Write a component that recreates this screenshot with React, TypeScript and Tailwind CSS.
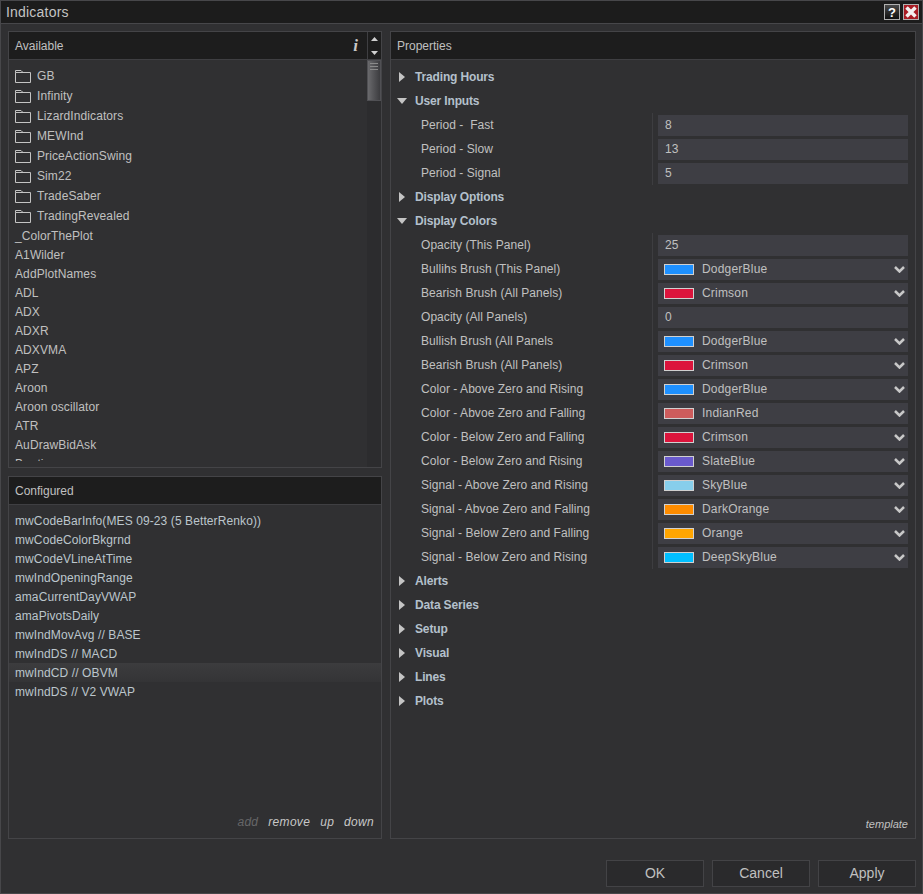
const font = "font-['Liberation_Sans',Arial,sans-serif]"

const folders = ["GB", "Infinity", "LizardIndicators", "MEWInd", "PriceActionSwing", "Sim22", "TradeSaber", "TradingRevealed"]

const available = [
  "_ColorThePlot",
  "A1Wilder",
  "AddPlotNames",
  "ADL",
  "ADX",
  "ADXR",
  "ADXVMA",
  "APZ",
  "Aroon",
  "Aroon oscillator",
  "ATR",
  "AuDrawBidAsk",
  "Bar timer",
]

const configured = [
  "mwCodeBarInfo(MES 09-23 (5 BetterRenko))",
  "mwCodeColorBkgrnd",
  "mwCodeVLineAtTime",
  "mwIndOpeningRange",
  "amaCurrentDayVWAP",
  "amaPivotsDaily",
  "mwIndMovAvg // BASE",
  "mwIndDS // MACD",
  "mwIndCD // OBVM",
  "mwIndDS // V2 VWAP",
]

type Prop = { label: string; value: string; color?: string }

const userInputs: Prop[] = [
  { label: "Period -  Fast", value: "8" },
  { label: "Period - Slow", value: "13" },
  { label: "Period - Signal", value: "5" },
]

const displayColors: Prop[] = [
  { label: "Opacity (This Panel)", value: "25" },
  { label: "Bullihs Brush (This Panel)", value: "DodgerBlue", color: "#1e90ff" },
  { label: "Bearish Brush (All Panels)", value: "Crimson", color: "#dc143c" },
  { label: "Opacity (All Panels)", value: "0" },
  { label: "Bullish Brush (All Panels", value: "DodgerBlue", color: "#1e90ff" },
  { label: "Bearish Brush (All Panels)", value: "Crimson", color: "#dc143c" },
  { label: "Color - Above Zero and Rising", value: "DodgerBlue", color: "#1e90ff" },
  { label: "Color - Abvoe Zero and Falling", value: "IndianRed", color: "#cd5c5c" },
  { label: "Color - Below Zero and Falling", value: "Crimson", color: "#dc143c" },
  { label: "Color - Below Zero and Rising", value: "SlateBlue", color: "#6a5acd" },
  { label: "Signal - Above Zero and Rising", value: "SkyBlue", color: "#87ceeb" },
  { label: "Signal - Abvoe Zero and Falling", value: "DarkOrange", color: "#ff8c00" },
  { label: "Signal - Below Zero and Falling", value: "Orange", color: "#ffa500" },
  { label: "Signal - Below Zero and Rising", value: "DeepSkyBlue", color: "#00bfff" },
]

function FolderIcon() {
  return (
    <svg width="16" height="13" viewBox="0 0 16 13" fill="none" stroke="#c4c4c4" strokeWidth="1" className="shrink-0">
      <path d="M0.5 2.5V0.5H6L8 2.5H15.5V12.5H0.5V2.5H8" />
    </svg>
  )
}

function Section({ name, open }: { name: string; open?: boolean }) {
  return (
    <div className="flex h-6 items-center">
      <div className="flex w-[24px] justify-center pr-[3px]">
        {open ? (
          <svg width="10" height="6" viewBox="0 0 10 6">
            <path d="M0 0H10L5 6Z" fill="#c4c4c4" />
          </svg>
        ) : (
          <svg width="6" height="10" viewBox="0 0 6 10">
            <path d="M0 0L6 5L0 10Z" fill="#c4c4c4" />
          </svg>
        )}
      </div>
      <span className="text-[12px] font-bold tracking-[-0.15px] text-[#b4c0cc]">{name}</span>
    </div>
  )
}

function PropRows({ rows }: { rows: Prop[] }) {
  return (
    <div>
      {rows.map((r, i) => (
        <div key={i} className="flex h-6 items-center">
          <div className="w-[261px] shrink-0 whitespace-pre pl-[30px] text-[12px] tracking-[0.05px] text-[#c0c0c0]">{r.label}</div>
          <div className="flex h-full w-[6px] shrink-0 justify-start">
            <div className="h-full w-px bg-[#3d3d40]" />
          </div>
          <div className="flex h-[21px] w-[250px] shrink-0 items-center bg-[#3e3e44] text-[12px] text-[#c0c0c0]">
            {r.color ? (
              <>
                <span
                  className="ml-[6px] h-[11px] w-[30px] shrink-0 border border-[#d0d0d0]"
                  style={{ backgroundColor: r.color }}
                />
                <span className="ml-2 flex-1 tracking-[0.2px]">{r.value}</span>
                <svg width="11" height="7" viewBox="0 0 11 7" fill="none" stroke="#c8c8c8" strokeWidth="2.5" className="mr-[3px]">
                  <path d="M1 1L5.5 5.5L10 1" />
                </svg>
              </>
            ) : (
              <span className="ml-[7px] tracking-[0.2px]">{r.value}</span>
            )}
          </div>
        </div>
      ))}
    </div>
  )
}

function Header({ title, children }: { title: string; children?: React.ReactNode }) {
  return (
    <div className="flex h-[28px] shrink-0 items-center border-b border-[#3f3f42] bg-[#1d1d1d] pl-[6px] text-[12px] text-[#c0c0c0]">
      <span className="flex-1">{title}</span>
      {children}
    </div>
  )
}

function DialogButton({ label }: { label: string }) {
  return (
    <div className="flex h-[27px] w-[98px] items-center justify-center border border-[#434346] bg-[#2a2a2c] text-[14px] text-[#c0c0c0]">
      {label}
    </div>
  )
}

export default function App() {
  return (
    <div className={`${font} flex h-[894px] w-[923px] flex-col overflow-hidden border border-[#47474a] bg-[#303032]`}>
      {/* title bar */}
      <div className="flex h-[23px] shrink-0 items-center border-b border-[#47474a] bg-[#1c1c1c] pl-[5px] pr-[3px]">
        <span className="flex-1 text-[14px] tracking-[0.2px] text-[#c4c4c4]">Indicators</span>
        <div className="flex h-4 w-4 items-center justify-center border border-[#b0b0b0] bg-gradient-to-b from-[#4a4a4a] to-[#111] text-[13px] font-bold leading-none text-white">
          ?
        </div>
        <div className="ml-[3px] flex h-4 w-4 items-center justify-center border border-[#b0b0b0] bg-[#a81c24]">
          <svg width="12" height="12" viewBox="0 0 12 12" stroke="#f4f0f0" strokeWidth="3.5">
            <path d="M1.5 1.5L10.5 10.5M10.5 1.5L1.5 10.5" />
          </svg>
        </div>
      </div>

      {/* body */}
      <div className="flex gap-2 pl-[7px] pt-[7px]">
        <div className="flex w-[374px] flex-col gap-2">
          <div className="flex h-[437px] flex-col overflow-hidden border border-[#444447]">
            <Header title="Available">
              <span className="mr-[9px] font-['Liberation_Serif',serif] text-[17px] font-bold italic leading-none text-[#c8c8c8]">i</span>
              <div className="flex h-full w-[14px] flex-col items-center justify-center gap-[10px] border-l border-[#3f3f42]">
                <svg width="7" height="4" viewBox="0 0 7 4">
                  <path d="M0 4L3.5 0L7 4Z" fill="#d0d0d0" />
                </svg>
                <svg width="7" height="4" viewBox="0 0 7 4">
                  <path d="M0 0H7L3.5 4Z" fill="#d0d0d0" />
                </svg>
              </div>
            </Header>
            <div className="flex min-h-0 flex-1">
              <div className="mb-[6px] min-w-0 flex-1 overflow-hidden pl-[6px] pt-[6px] text-[12px] tracking-[0.1px] text-[#c0c0c0]">
                {folders.map((f) => (
                  <div key={f} className="flex h-5 items-center gap-[6px]">
                    <FolderIcon />
                    <span>{f}</span>
                  </div>
                ))}
                {available.map((a) => (
                  <div key={a} className="flex h-[19px] items-center">
                    {a}
                  </div>
                ))}
              </div>
              <div className="w-[14px] shrink-0 bg-[#2c2c2e]">
                <div className="flex h-[41px] flex-col items-center gap-[2px] border border-[#505054] bg-gradient-to-r from-[#6a6a6d] to-[#3c3c3f] pt-[2px]">
                  <div className="h-px w-2 bg-[#8a8a8a]" />
                  <div className="h-px w-2 bg-[#8a8a8a]" />
                  <div className="h-px w-2 bg-[#8a8a8a]" />
                </div>
              </div>
            </div>
          </div>

          <div className="flex h-[363px] flex-col border border-[#444447]">
            <Header title="Configured" />
            <div className="flex-1 pt-[6px] text-[12px] tracking-[0.1px] text-[#bcc6cc]">
              {configured.map((c, i) => (
                <div
                  key={c}
                  className={`flex h-[19px] items-center pl-[6px] ${i === 8 ? "bg-gradient-to-b from-[#3c3c3e] to-[#343436]" : ""}`}
                >
                  {c}
                </div>
              ))}
            </div>
            <div className="flex justify-end gap-[10px] pb-[7px] pr-[7px] text-[12px] italic tracking-[0.3px] text-[#c8c8c8]">
              <span className="text-[#666668]">add</span>
              <span>remove</span>
              <span>up</span>
              <span>down</span>
            </div>
          </div>
        </div>

        <div className="flex h-[808px] w-[526px] flex-col border border-[#444447]">
          <Header title="Properties" />
          <div className="flex-1 pt-[5px]">
            <Section name="Trading Hours" />
            <Section name="User Inputs" open />
            <PropRows rows={userInputs} />
            <Section name="Display Options" />
            <Section name="Display Colors" open />
            <PropRows rows={displayColors} />
            {["Alerts", "Data Series", "Setup", "Visual", "Lines", "Plots"].map((s) => (
              <Section key={s} name={s} />
            ))}
          </div>
          <div className="pb-[6px] pr-[7px] text-right text-[11px] italic text-[#c0c0c0]">template</div>
        </div>
      </div>

      {/* footer */}
      <div className="flex justify-end gap-2 pr-[6px] pt-[21px]">
        <DialogButton label="OK" />
        <DialogButton label="Cancel" />
        <DialogButton label="Apply" />
      </div>
    </div>
  )
}
